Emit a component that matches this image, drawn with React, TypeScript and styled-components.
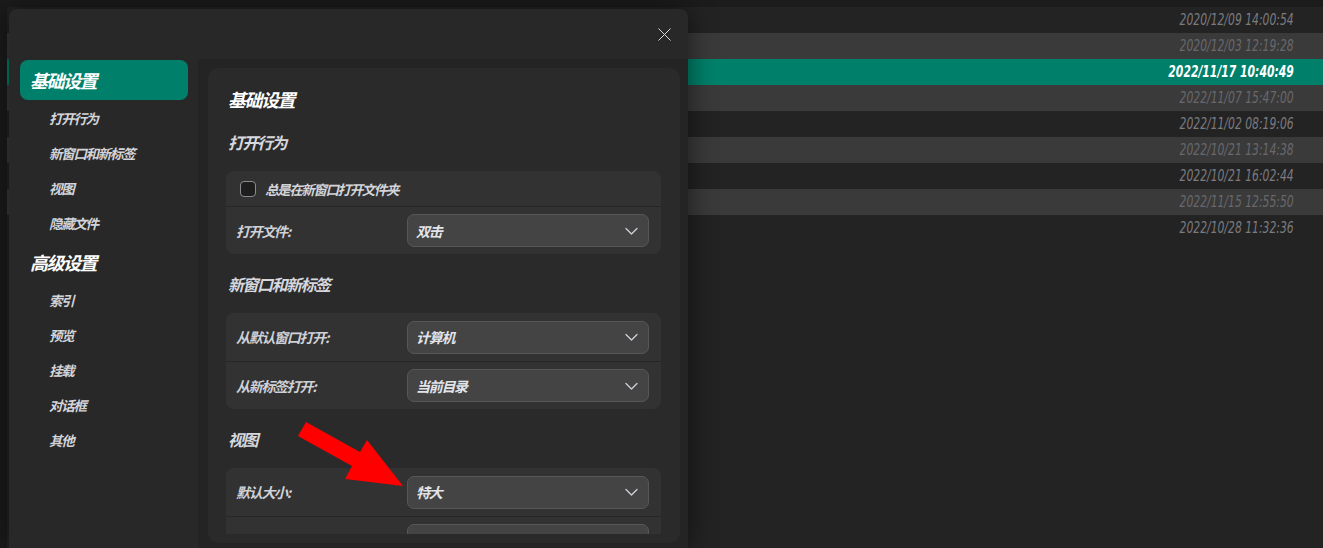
import React from "react";
import styled, { createGlobalStyle } from "styled-components";

const GlobalStyle = createGlobalStyle`
  html, body {
    margin: 0;
    padding: 0;
    background: #232323;
    overflow: hidden;
  }
  * { box-sizing: border-box; }
`;

const cjk = `"Noto Sans CJK SC", "Noto Sans", sans-serif`;

const Page = styled.div`
  position: relative;
  width: 1323px;
  height: 548px;
  display: flex;
  flex-direction: column;
  background: #232323;
  overflow: hidden;
`;

const TopBand = styled.div`
  height: 7px;
  flex: none;
  background: #1c1c1c;
`;

const Body = styled.div`
  flex: 1;
  display: flex;
`;

const LeftStrip = styled.div`
  width: 7px;
  flex: none;
  background: #1b1b1b;
`;

const List = styled.div`
  flex: 1;
  display: flex;
  flex-direction: column;
`;

type Variant = "dark" | "light" | "selected";

const Row = styled.div<{ $variant: Variant }>`
  height: 26px;
  display: flex;
  align-items: center;
  justify-content: flex-end;
  padding-right: 29px;
  background: ${(p) =>
    p.$variant === "selected" ? "#00806a" : p.$variant === "light" ? "#3a3a3a" : "#232323"};
`;

// the app uses a condensed face; squeeze the installed one to the same width
const DateText = styled.span<{ $variant: Variant }>`
  display: inline-block;
  transform: scaleX(0.8);
  transform-origin: right center;
  font-family: "DejaVu Sans Condensed", "Liberation Sans", sans-serif;
  font-style: italic;
  font-size: 15px;
  font-weight: ${(p) => (p.$variant === "selected" ? 700 : 400)};
  color: ${(p) =>
    p.$variant === "selected" ? "#ffffff" : p.$variant === "light" ? "#68686c" : "#7b7b80"};
`;

const Dialog = styled.div`
  position: absolute;
  left: 9px;
  top: 9px;
  width: 679px;
  height: 539px;
  background: #282828;
  border-radius: 8px 8px 0 0;
  box-shadow: 0 0 28px rgba(0, 0, 0, 0.55);
  display: flex;
  flex-direction: column;
  overflow: hidden;
`;

const DialogHeader = styled.div`
  height: 50px;
  flex: none;
  display: flex;
  justify-content: flex-end;
  align-items: center;
  padding-right: 12px;
`;

const CloseButton = styled.button`
  width: 24px;
  height: 24px;
  border: 0;
  padding: 0;
  background: transparent;
  display: flex;
  align-items: center;
  justify-content: center;
  cursor: pointer;
`;

const DialogBody = styled.div`
  flex: 1;
  display: flex;
  min-height: 0;
`;

const Sidebar = styled.nav`
  width: 189px;
  flex: none;
  padding-top: 1px;
  display: flex;
  flex-direction: column;
`;

const GroupHeader = styled.div<{ $selected?: boolean }>`
  height: 40px;
  margin: ${(p) => (p.$selected ? "0" : "2px")} 10px 0 11px;
  padding-left: 10px;
  display: flex;
  align-items: center;
  border-radius: 8px;
  background: ${(p) => (p.$selected ? "#00806a" : "transparent")};
  font-family: ${cjk};
  font-weight: 700;
  font-style: italic;
  font-size: 18px;
  letter-spacing: -1.5px;
  color: #ffffff;
`;

const NavItem = styled.div`
  height: 35px;
  padding-left: 40px;
  display: flex;
  align-items: center;
  font-family: ${cjk};
  font-weight: 700;
  font-style: italic;
  font-size: 13.5px;
  letter-spacing: -1.3px;
  color: #d2d4da;
`;

const ContentArea = styled.div`
  flex: 1;
  background: #242424;
  padding: 9px 8px 5px 10px;
  display: flex;
`;

const Panel = styled.div`
  flex: 1;
  background: #2a2a2a;
  border-radius: 10px;
  padding: 0 19px 9px 18px;
  display: flex;
`;

const PanelScroll = styled.div`
  flex: 1;
  overflow: hidden;
  display: flex;
  flex-direction: column;
  padding-top: 18px;
`;

const Title = styled.div`
  height: 26px;
  line-height: 26px;
  padding-left: 2px;
  font-family: ${cjk};
  font-weight: 700;
  font-style: italic;
  font-size: 18px;
  letter-spacing: -1.5px;
  color: #ffffff;
`;

const SectionTitle = styled.div`
  height: 24px;
  line-height: 24px;
  margin: 18px 0 17px;
  padding-left: 2px;
  font-family: ${cjk};
  font-weight: 700;
  font-style: italic;
  font-size: 16px;
  letter-spacing: -1.5px;
  color: #d6d8de;
  flex: none;
`;

const Card = styled.div`
  flex: none;
  background: #323232;
  border-radius: 8px;
  display: flex;
  flex-direction: column;
  & > * + * {
    border-top: 1px solid #262626;
  }
`;

const CheckRow = styled.label`
  height: 35px;
  padding-left: 14px;
  display: flex;
  align-items: center;
  gap: 9px;
  font-family: ${cjk};
  font-weight: 700;
  font-style: italic;
  font-size: 13.5px;
  letter-spacing: -1.4px;
  color: #d2d4da;
`;

const CheckBox = styled.span`
  width: 16px;
  height: 16px;
  border-radius: 4px;
  border: 1.5px solid #8a8a90;
  background: #1e1e1e;
  flex: none;
`;

const SelectRow = styled.div`
  height: 48px;
  padding: 0 12px 0 10px;
  display: flex;
  align-items: center;
`;

const RowLabel = styled.span`
  width: 171px;
  flex: none;
  font-family: ${cjk};
  font-weight: 700;
  font-style: italic;
  font-size: 14px;
  letter-spacing: -1.3px;
  color: #cfd1d7;
`;

const Select = styled.div`
  flex: 1;
  height: 33px;
  border-radius: 7px;
  border: 1px solid #575757;
  background: #444444;
  display: flex;
  align-items: center;
  justify-content: space-between;
  padding: 0 10px 0 8px;
  font-family: ${cjk};
  font-weight: 700;
  font-style: italic;
  font-size: 14px;
  letter-spacing: -1.3px;
  color: #e2e4ea;
`;

const ArrowOverlay = styled.svg`
  position: absolute;
  left: 0;
  top: 0;
  pointer-events: none;
`;

const dates: { text: string; variant: Variant }[] = [
  { text: "2020/12/09 14:00:54", variant: "dark" },
  { text: "2020/12/03 12:19:28", variant: "light" },
  { text: "2022/11/17 10:40:49", variant: "selected" },
  { text: "2022/11/07 15:47:00", variant: "light" },
  { text: "2022/11/02 08:19:06", variant: "dark" },
  { text: "2022/10/21 13:14:38", variant: "light" },
  { text: "2022/10/21 16:02:44", variant: "dark" },
  { text: "2022/11/15 12:55:50", variant: "light" },
  { text: "2022/10/28 11:32:36", variant: "dark" },
];

const nav = [
  { title: "基础设置", selected: true, items: ["打开行为", "新窗口和新标签", "视图", "隐藏文件"] },
  { title: "高级设置", selected: false, items: ["索引", "预览", "挂载", "对话框", "其他"] },
];

const Chevron = () => (
  <svg width="13" height="8" viewBox="0 0 13 8" fill="none">
    <path d="M1 1.5l5.5 5.5 5.5-5.5" stroke="#cfd1d7" strokeWidth="1.3" strokeLinecap="round" strokeLinejoin="round" />
  </svg>
);

const Dropdown = ({ value }: { value?: string }) => (
  <Select>
    <span>{value}</span>
    <Chevron />
  </Select>
);

const App = () => {
  return (
    <Page>
      <GlobalStyle />
      <TopBand />
      <Body>
        <LeftStrip />
        <List>
          {dates.map((d) => (
            <Row key={d.text} $variant={d.variant}>
              <DateText $variant={d.variant}>{d.text}</DateText>
            </Row>
          ))}
        </List>
      </Body>

      <Dialog>
        <DialogHeader>
          <CloseButton aria-label="close">
            <svg width="13" height="13" viewBox="0 0 13 13" fill="none">
              <path d="M0.5 0.5l12 12M12.5 0.5l-12 12" stroke="#d8d8de" strokeWidth="1" />
            </svg>
          </CloseButton>
        </DialogHeader>
        <DialogBody>
          <Sidebar>
            {nav.map((g) => (
              <React.Fragment key={g.title}>
                <GroupHeader $selected={g.selected}>{g.title}</GroupHeader>
                {g.items.map((it) => (
                  <NavItem key={it}>{it}</NavItem>
                ))}
              </React.Fragment>
            ))}
          </Sidebar>
          <ContentArea>
            <Panel>
              <PanelScroll>
                <Title>基础设置</Title>
                <SectionTitle>打开行为</SectionTitle>
                <Card>
                  <CheckRow>
                    <CheckBox />
                    总是在新窗口打开文件夹
                  </CheckRow>
                  <SelectRow>
                    <RowLabel>打开文件:</RowLabel>
                    <Dropdown value="双击" />
                  </SelectRow>
                </Card>
                <SectionTitle>新窗口和新标签</SectionTitle>
                <Card>
                  <SelectRow>
                    <RowLabel>从默认窗口打开:</RowLabel>
                    <Dropdown value="计算机" />
                  </SelectRow>
                  <SelectRow>
                    <RowLabel>从新标签打开:</RowLabel>
                    <Dropdown value="当前目录" />
                  </SelectRow>
                </Card>
                <SectionTitle>视图</SectionTitle>
                <Card>
                  <SelectRow>
                    <RowLabel>默认大小:</RowLabel>
                    <Dropdown value="特大" />
                  </SelectRow>
                  <SelectRow>
                    <RowLabel />
                    <Dropdown />
                  </SelectRow>
                </Card>
              </PanelScroll>
            </Panel>
          </ContentArea>
        </DialogBody>
      </Dialog>

      <ArrowOverlay width="1323" height="548" viewBox="0 0 1323 548">
        <polygon
          points="306,422 360,452 367,440 403,486 345,479 352,466 298,436"
          fill="#ff0000"
        />
      </ArrowOverlay>
    </Page>
  );
};

export default App;
